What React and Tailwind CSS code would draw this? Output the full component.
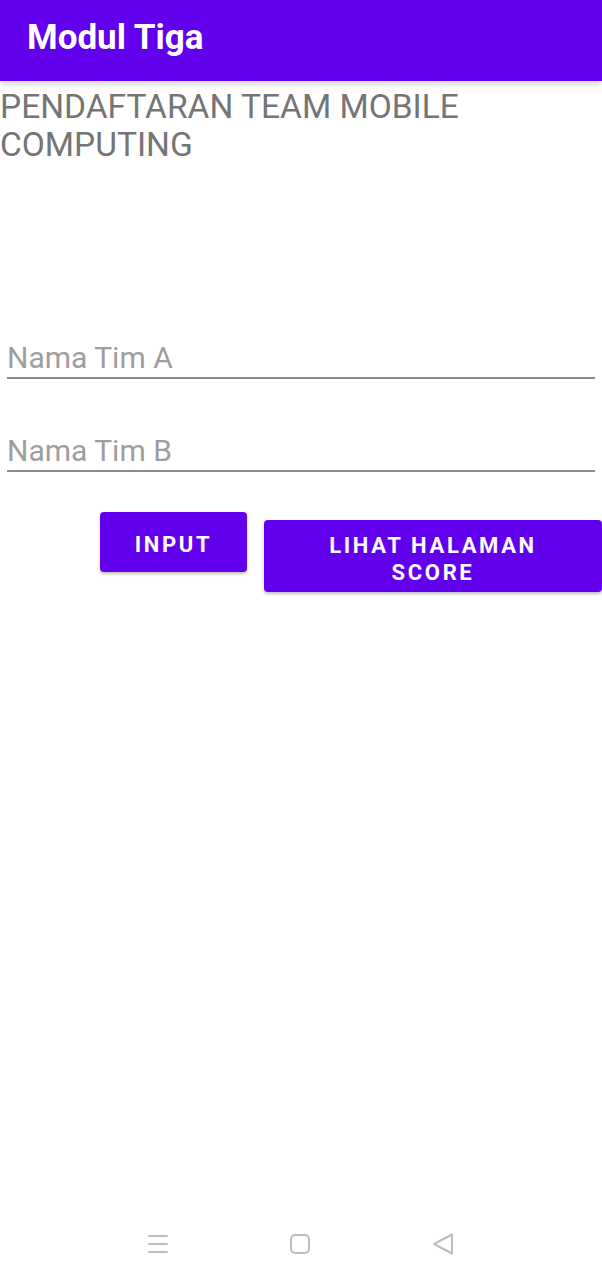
import React from 'react'

function Field({ hint, className = '' }) {
  return (
    <div className={`mx-[7px] border-b-2 border-[#8a8a8a] pb-[3px] ${className}`}>
      <span className="block text-[30px] leading-[33px] text-[#9e9e9e]">{hint}</span>
    </div>
  )
}

export default function App() {
  return (
    <div className="flex flex-col h-[1280px] bg-white overflow-hidden" style={{ fontFamily: 'Roboto, "Noto Sans", sans-serif' }}>
      {/* App bar */}
      <div className="h-[81px] bg-[#6200ee] flex items-center px-[27px] shadow-[0_3px_6px_rgba(0,0,0,0.18)] relative z-10">
        <h1 className="text-white text-[35px] font-bold leading-none -mt-[6px]">Modul Tiga</h1>
      </div>

      {/* Content */}
      <p className="mt-[7px] text-[33.5px] leading-[38px] text-[#757575]">PENDAFTARAN TEAM MOBILE COMPUTING</p>

      <Field hint="Nama Tim A" className="mt-[177px]" />
      <Field hint="Nama Tim B" className="mt-[55px]" />

      <div className="flex items-start gap-[17px] pl-[100px] mt-[40px]">
        <button className="w-[147px] h-[60px] pt-[5px] rounded bg-[#6200ee] text-white text-[22px] font-bold tracking-[0.12em] leading-[27px] shadow-[0_2px_3px_rgba(0,0,0,0.25)]">
          INPUT
        </button>
        <button className="mt-[8px] w-[338px] h-[72px] pt-[5px] rounded bg-[#6200ee] text-white text-[22px] font-bold tracking-[0.12em] leading-[27px] shadow-[0_2px_3px_rgba(0,0,0,0.25)]">
          LIHAT HALAMAN<br />SCORE
        </button>
      </div>

      {/* Navigation bar */}
      <div className="mt-auto h-[72px] flex items-center justify-center">
        <div className="flex items-center justify-between w-[306px]">
          <svg width="20" height="20" viewBox="0 0 20 20" className="text-[#bdbdbd]">
            <g stroke="currentColor" strokeWidth="2" strokeLinecap="round">
              <line x1="1" y1="2" x2="19" y2="2" />
              <line x1="1" y1="10" x2="19" y2="10" />
              <line x1="1" y1="18" x2="19" y2="18" />
            </g>
          </svg>
          <svg width="20" height="20" viewBox="0 0 20 20" className="text-[#bdbdbd]">
            <rect x="1" y="1" width="18" height="18" rx="4" fill="none" stroke="currentColor" strokeWidth="2" />
          </svg>
          <svg width="22" height="22" viewBox="0 0 22 22" className="text-[#bdbdbd]">
            <path d="M20 1.5 L2 11 L20 20.5 Z" fill="none" stroke="currentColor" strokeWidth="2" strokeLinejoin="round" />
          </svg>
        </div>
      </div>
    </div>
  )
}
